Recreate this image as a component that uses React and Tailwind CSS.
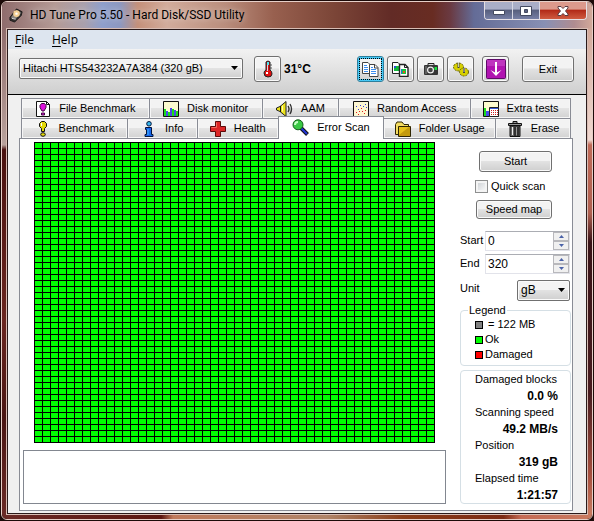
import * as React from "react"
import clsx from "clsx"

const COLS = 50
const ROWS = 50

const stats = [
  { label: "Damaged blocks", value: "0.0 %" },
  { label: "Scanning speed", value: "49.2 MB/s" },
  { label: "Position", value: "319 gB" },
  { label: "Elapsed time", value: "1:21:57" },
]

const Icon = ({ size = "size-4", box = "0 0 16 16", children }) => (
  <svg className={clsx("shrink-0", size)} viewBox={box} aria-hidden="true">
    {children}
  </svg>
)

/* Title bar and toolbar drawings */

const DiskIcon = () => (
  <Icon size="size-[15px]">
    <path d="M1 10 8 1l6 3-1 4-7 7-5-2z" fill="#33302f" stroke="#1c1a1a" />
    <path d="m2 10 6-8 5 3-6 7z" fill="#8b8580" />
    <circle cx="8" cy="6" r="3.5" fill="#f5cf93" />
    <circle cx="8" cy="6" r="1.3" fill="#fff" />
    <path d="m3 11 4 1" stroke="#ddd" />
  </Icon>
)

const ThermometerIcon = () => (
  <Icon size="h-[18px] w-[10px]" box="0 0 10 18">
    <path d="M3 2q2-2 4 0v8q2 1 2 4t-4 3q-4 0-4-4 0-2 2-3z" fill="#e01010" stroke="#222" />
    <path d="M4 2h2v3H4z" fill="#4fe3ee" />
    <path d="M4 5h1v6H4z" fill="#d8d8e8" />
    <path d="M3 12h2v2H3z" fill="#fff" />
    <path d="M7 5h2M7 8h2" stroke="#555" />
  </Icon>
)

const CopyIcon = () => (
  <Icon size="h-4 w-[17px]" box="0 0 17 16">
    <path d="M.5 1.5H6l2 2v9H.5z" fill="#fff" stroke="#444" />
    <path d="M2 4.5h3M2 6.5h4M2 8.5h4M2 10.5h4" stroke="#3f8ff0" />
    <path d="M7.5 3.5H13l3 3v9H7.5z" fill="#fff" stroke="#444" />
    <path d="M12.5 3.5V7H16" fill="none" stroke="#444" />
    <path d="M9 6.5h2M9 8.5h5M9 10.5h5M9 12.5h5" stroke="#3f8ff0" />
  </Icon>
)

const CopyImageIcon = () => (
  <Icon size="h-4 w-[17px]" box="0 0 17 16">
    <path d="M.5 1.5H6l2 2v9H.5z" fill="#fff" stroke="#222" />
    <path d="M2 5h5v5H2z" fill="#12b83a" />
    <path d="M2 5h2v2H2z" fill="#2850d0" />
    <path d="M7.5 3.5H13l3 3v9H7.5z" fill="#fff" stroke="#222" strokeWidth="1.4" />
    <path d="M12.5 3.5v3H16" fill="none" stroke="#222" />
    <path d="M9 8h5v5H9z" fill="#14c83c" />
    <path d="M9 8h1v5H9z" fill="#2070d8" />
    <path d="M11 10h2v2h-2z" fill="#e85020" />
  </Icon>
)

const CameraIcon = () => (
  <Icon>
    <path d="M5 5V2.5h6V5" fill="#ddd" stroke="#222" />
    <rect x="1" y="4" width="14" height="10" rx="1" fill="#353535" />
    <path d="M3 5v8" stroke="#888" />
    <circle cx="7.5" cy="9" r="3.5" fill="#eee" />
    <circle cx="7.5" cy="9" r="2.3" fill="#444" />
    <path d="M11.5 6H14v3h-2.500z" fill="#17e03b" />
  </Icon>
)

const GearsIcon = () => (
  <Icon>
    <g fill="#d8d000" stroke="#635f08">
      <ellipse cx="5.5" cy="6" rx="5" ry="4" strokeDasharray="2 1" />
      <ellipse cx="11" cy="11" rx="4.5" ry="4" strokeDasharray="2 1" />
    </g>
    <path d="M5.5 2v5M11 7v5" stroke="#444" strokeWidth="2" />
    <path d="M5.5 2v4M11 7v4" stroke="#c8c8b0" />
  </Icon>
)

const DownloadIcon = () => (
  <Icon size="size-5" box="0 0 20 20">
    <rect x=".5" y=".5" width="19" height="19" rx="1" fill="#b013b0" stroke="#5e0a68" />
    <path d="M1 1h18v6H1z" fill="#c94dca" opacity=".6" />
    <path d="M10 3v11" stroke="#fff" strokeWidth="2" />
    <path d="M4.5 11 10 14l5.500-3L10 17z" fill="#fff" />
  </Icon>
)

/* Tab drawings */

const FileBenchmarkIcon = () => (
  <Icon>
    <path d="M1.5.5h10l3 3v12h-13z" fill="#fff" stroke="#111" />
    <path d="M11.5.5v3h3" fill="none" stroke="#111" />
    <path d="M6.5 2.5h3l1.5 2v2L9 10H7L5 6.500v-2z" fill="#dd10dd" stroke="#400840" />
    <path d="M6.5 12h3v2h-3z" fill="#dd10dd" stroke="#400840" />
  </Icon>
)

const DiskMonitorIcon = () => (
  <Icon>
    <path d="M.5.5h15v15H.5z" fill="#fdfbd0" stroke="#111" />
    <path d="M1 8h2v7H1zM5 11h2v4H5zM9 8h2v7H9zM13 10h2v5h-2z" fill="#19dc19" />
    <path d="M3 10h2v5H3zM7 7h2v8H7zM11 9h2v6h-2z" fill="#4a49e8" />
  </Icon>
)

const SpeakerIcon = () => (
  <Icon size="h-4 w-[17px]" box="0 0 17 16">
    <path d="M.5 7 4 5.5l6-5v15l-6-5L.5 9z" fill="#ece21b" stroke="#222" />
    <path d="M4.5 5v6" stroke="#111" />
    <path d="M6.5 4.5v6" stroke="#fffbb0" />
    <path d="M12 5q2 3 0 6M14 3q3 5 0 10" fill="none" stroke="#333" strokeWidth="1.4" />
  </Icon>
)

const RandomAccessIcon = () => (
  <Icon>
    <path d="M.5.5h15v15H.5z" fill="#fdf6d2" stroke="#111" />
    <path d="M3 11h1v1H3zM6 10h1v1H6zM5 13h1v1H5zM9 10h1v1H9zM12 9h1v1h-1zM11 12h1v1h-1zM8 7h1v1H8z" fill="#e02020" />
    <path d="M3 5h1v1H3zM7 4h1v1H7zM10 5h1v1h-1zM12 3h1v1h-1zM5 8h1v1H5zM13 6h1v1h-1z" fill="#3040d8" />
  </Icon>
)

const ExtraTestsIcon = () => (
  <Icon>
    <path d="M.5.5h15v15H.5z" fill="#fdfbd0" stroke="#111" />
    <path d="M1 7h2v8H1z" fill="#19dc19" />
    <path d="M3 10h3v5H3z" fill="#4a49e8" />
    <path d="M6.5 6.5h9v9h-9z" fill="#fff" stroke="#222" />
    <path d="M7 7h8v1H7z" fill="#3658d8" />
    <path d="M8 9.5h7M8 11.5h7M8 13.5h7" stroke="#d02020" strokeDasharray="1 1" />
  </Icon>
)

const BenchmarkIcon = () => (
  <Icon>
    <path d="M6.5.5h3l2 2v3l-2 2v3h-3v-3l-2-2v-3z" fill="#e2d808" stroke="#111" />
    <path d="M6.5 2v3" stroke="#fff" />
    <ellipse cx="8" cy="13.5" rx="2.3" ry="1.8" fill="#e2d808" stroke="#111" />
  </Icon>
)

const InfoIcon = () => (
  <Icon>
    <circle cx="8" cy="2.8" r="2.3" fill="#35b8ee" stroke="#04143c" />
    <path d="M4.5 6.5h6v7H12v2H4v-2h1.500v-5h-1z" fill="#1767ea" stroke="#04143c" />
    <path d="M7 8v6" stroke="#43b7ff" />
  </Icon>
)

const HealthIcon = () => (
  <Icon>
    <path d="M5.5.5h5v5h5v5h-5v5h-5v-5h-5v-5h5z" fill="#dc2626" stroke="#5b0a0a" />
    <path d="M6.5 1.5v5h-5" fill="none" stroke="#f26a60" />
  </Icon>
)

const SearchIcon = () => (
  <Icon size="size-[17px]" box="0 0 17 17">
    <path d="m9 9 6.500 6.500" stroke="#111" strokeWidth="4" />
    <path d="m9 9 6 6" stroke="#2336d8" strokeWidth="2" />
    <circle cx="6" cy="5.8" r="5" fill="#39c944" stroke="#135a1a" />
    <path d="M3 6q0-3 3-3" fill="none" stroke="#c5ffc4" strokeWidth="2" />
  </Icon>
)

const FolderIcon = () => (
  <Icon>
    <path d="M.5 3.5 2 1h5l2 2.500h4.500v10H.5z" fill="#f3dc62" stroke="#2f2503" />
    <path d="M3.5 5.5h12v10h-12z" fill="#e6c01c" stroke="#2f2503" />
    <path d="M4 14 14 6h1v9H4z" fill="#c39a0d" />
  </Icon>
)

const TrashIcon = () => (
  <Icon>
    <path d="M6 2V.5h4V2M1.5 2.5h13v2h-13z" fill="#999" stroke="#111" />
    <path d="M3 5h10v10.500H3z" fill="#666" stroke="#111" />
    <path d="M5.5 6v8" stroke="#eee" />
    <path d="M8 6v9M11 6v9" stroke="#222" strokeWidth="1.5" />
    <path d="M9.5 6v8" stroke="#999" />
  </Icon>
)

const topTabs = [
  { name: "File Benchmark", icon: FileBenchmarkIcon },
  { name: "Disk monitor", icon: DiskMonitorIcon },
  { name: "AAM", icon: SpeakerIcon },
  { name: "Random Access", icon: RandomAccessIcon },
  { name: "Extra tests", icon: ExtraTestsIcon },
]

const bottomTabs = [
  { name: "Benchmark", icon: BenchmarkIcon },
  { name: "Info", icon: InfoIcon },
  { name: "Health", icon: HealthIcon },
  { name: "Error Scan", icon: SearchIcon },
  { name: "Folder Usage", icon: FolderIcon },
  { name: "Erase", icon: TrashIcon },
]

const face = "bg-linear-to-b from-[#f3f3f3] from-45% via-[#e2e2e2] via-50% to-[#cfcfcf]"

const Button = ({ className, selected, children, ...props }) => (
  <button
    type="button"
    className={clsx(
      "flex items-center justify-center rounded-[3px] border",
      selected
        ? "border-[#2d7f9d] shadow-[inset_0_0_0_2px_#46c8f5] outline-1 -outline-offset-[3px] outline-dotted outline-black"
        : "border-[#707070] shadow-[inset_0_0_0_1px_#fafafa]",
      face,
      className
    )}
    {...props}
  >
    {children}
  </button>
)

const Select = ({ label, value, className }) => (
  <div className={clsx("relative", className)}>
    <select
      aria-label={label}
      id={label}
      className={clsx(
        "h-[21px] w-full appearance-none rounded-[2px] border border-[#707070] pl-[3px] leading-[19px] shadow-[inset_0_0_0_1px_#fafafa]",
        face
      )}
    >
      <option>{value}</option>
    </select>
    <svg className="pointer-events-none absolute top-2 right-[5px] h-1 w-[7px]" viewBox="0 0 7 4">
      <path d="M0 0h7L3.5 4z" />
    </svg>
  </div>
)

const SpinBox = ({ label, initial }) => {
  const [value, setValue] = React.useState(initial)

  return (
    <div className="flex items-start justify-between">
      <label htmlFor={label} className="leading-[18px]">{label}</label>
      <div className="mr-px flex h-5 w-[85px] border border-[#e2e3ea] border-t-[#abadb3] bg-white">
        <input
          id={label}
          type="text"
          inputMode="numeric"
          value={value}
          onChange={(e) => setValue(Number(e.target.value) || 0)}
          className="w-0 grow pl-[2px] text-[12px] outline-none"
        />
        <div className="flex w-4 flex-col">
          <button
            type="button"
            aria-label={`Increase ${label}`}
            onClick={() => setValue(value + 1)}
            className="flex flex-1 items-center justify-center border border-[#b8b8bc] bg-[#f0f0f0]"
          >
            <svg className="h-[3px] w-[5px]" viewBox="0 0 5 3"><path d="M0 3h5L2.500 0z" fill="#4a62a8" /></svg>
          </button>
          <button
            type="button"
            aria-label={`Decrease ${label}`}
            onClick={() => setValue(Math.max(0, value - 1))}
            className="flex flex-1 items-center justify-center border border-[#b8b8bc] bg-[#f0f0f0]"
          >
            <svg className="h-[3px] w-[5px]" viewBox="0 0 5 3"><path d="M0 0h5L2.500 3z" fill="#4a62a8" /></svg>
          </button>
        </div>
      </div>
    </div>
  )
}

const Tab = ({ tab, active, onSelect }) => {
  const TabIcon = tab.icon
  return (
    <button
      type="button"
      role="tab"
      aria-selected={active}
      onClick={() => onSelect(tab.name)}
      className={clsx(
        "flex items-center justify-center gap-2 whitespace-nowrap border-t border-r border-[#898c95]",
        active
          ? "z-10 -mt-[2px] -mb-px -ml-px border-l bg-white pb-[2px]"
          : "bg-linear-to-b from-[#f3f3f3] from-45% via-[#e4e4e4] via-50% to-[#d2d2d2] shadow-[inset_0_0_0_1px_#f6f6f6]"
      )}
    >
      <TabIcon />
      {tab.name}
    </button>
  )
}

const TitleBar = () => (
  <header className="flex h-[26px] items-start bg-[linear-gradient(90deg,#8f6c6c_0%,#b49a95_9%,#a9a0ad_14%,#8f9fcb_17%,#8d98c0_20%,#c4907a_23%,#d2ac9c_28%,#b98d7c_38%,#98604f_46%,#7c4638_56%,#622b26_66%,#682c22_73%,#6a3a42_76%,#646c97_80%,#8890b4_92%,#b08c90_97%,#d3a99a_100%)] pl-[7px]">
    <div className="flex h-[26px] grow items-center gap-[6px] text-[12px]">
      <DiskIcon />
      <h1 className="whitespace-nowrap font-[Roboto,sans-serif] [text-shadow:0_0_6px_#ffffffaa]">HD Tune Pro 5.50 - Hard Disk/SSD Utility</h1>
    </div>
    <div className="mr-[5px] flex h-[18px] shrink-0 overflow-hidden rounded-b-[4px] border border-t-0 border-[#e5dfe4]">
      <button type="button" aria-label="Minimize" className="flex w-7 items-center justify-center border-r border-[#d7d8e4] bg-linear-to-b from-[#a9aec7] from-40% via-[#59607f] via-50% to-[#767fa5]">
        <svg className="mt-1 h-[5px] w-3" viewBox="0 0 12 5"><path d="M.5.5h11v4H.5z" fill="#fff" stroke="#444a60" /></svg>
      </button>
      <button type="button" aria-label="Maximize" className="flex w-[27px] items-center justify-center border-r border-[#d7d8e4] bg-linear-to-b from-[#a9aec7] from-40% via-[#59607f] via-50% to-[#767fa5]">
        <svg className="h-[10px] w-3" viewBox="0 0 12 10"><path d="M.5.5h11v9H.5zM4.5 3.5v3h3v-3z" fill="#fff" fillRule="evenodd" stroke="#444a60" /></svg>
      </button>
      <button type="button" aria-label="Close" className="flex w-[46px] items-center justify-center bg-linear-to-b from-[#dc9a8c] from-40% via-[#b32a18] via-50% to-[#cf5a40]">
        <svg className="h-[10px] w-3" viewBox="0 0 12 10"><path d="M1 .5h3l2 2 2-2h3V2L8.500 5 11 8v1.500H8l-2-2-2 2H1V8l2.500-3L1 2z" fill="#fff" stroke="#5a3a40" /></svg>
      </button>
    </div>
  </header>
)

const Toolbar = () => (
  <div className="flex h-[46px] items-start border-b border-black bg-linear-to-b from-[#f2f2f2] to-[#cfcfcf] pt-[7px] pr-3 pl-[11px]">
    <Select label="Drive" value="Hitachi HTS543232A7A384 (320 gB)" className="mt-[2px] w-56" />
    <Button aria-label="Temperature" className="ml-[11px] h-[26px] w-[27px]"><ThermometerIcon /></Button>
    <span className="ml-[3px] text-[12px] leading-[26px] font-bold">31°C</span>
    <div className="ml-auto flex gap-[3px]">
      <Button aria-label="Copy text" selected className="h-[26px] w-[27px]"><CopyIcon /></Button>
      <Button aria-label="Copy image" className="h-[26px] w-[27px]"><CopyImageIcon /></Button>
      <Button aria-label="Screenshot" className="h-[26px] w-[27px]"><CameraIcon /></Button>
      <Button aria-label="Options" className="h-[26px] w-[27px]"><GearsIcon /></Button>
    </div>
    <Button aria-label="Save" className="ml-2 h-[26px] w-[27px]"><DownloadIcon /></Button>
    <Button className="ml-[13px] h-[26px] w-[52px]">Exit</Button>
  </div>
)

const ScanMap = () => (
  <svg
    className="mt-[3px] ml-[11px] h-auto w-[401px] max-w-full"
    viewBox={`0 0 ${COLS * 8 + 1} ${ROWS * 6 + 1}`}
    role="img"
    aria-label="Scan map"
  >
    <defs>
      <pattern id="block" width="8" height="6" patternUnits="userSpaceOnUse">
        <path d="M1 1h7v5H1z" fill="#00ff00" />
      </pattern>
    </defs>
    <rect width="100%" height="100%" />
    <rect width={COLS * 8} height={ROWS * 6} fill="url(#block)" />
  </svg>
)

const SidePanel = () => (
  <aside className="flex w-[111px] shrink-0 flex-col pt-3">
    <Button className="ml-[19px] h-[21px] w-[73px]">Start</Button>
    <label className="mt-2 ml-[15px] flex h-[13px] items-center gap-[3px] whitespace-nowrap">
      <input type="checkbox" className="size-[13px] appearance-none border border-[#8e8f8f] bg-linear-to-br from-[#c8ccd0] to-white shadow-[inset_0_0_0_2px_#f4f4f4] checked:bg-[#4a62a8]" />
      Quick scan
    </label>
    <Button className="mt-[7px] ml-4 h-[19px] w-[76px]">Speed map</Button>

    <div className="mt-3 flex flex-col gap-[3px]">
      <SpinBox label="Start" initial={0} />
      <SpinBox label="End" initial={320} />
    </div>
    <div className="mt-[6px] flex items-start justify-between">
      <label htmlFor="Unit" className="leading-4">Unit</label>
      <Select label="Unit" value="gB" className="mr-px w-[53px] text-[12px]" />
    </div>

    <fieldset className="mt-[2px] rounded-[4px] border border-[#d5dfe5] pb-[3px] pl-[14px]">
      <legend className="-ml-[7px] px-px leading-[14px]">Legend</legend>
      <ul className="leading-[15px]">
        <li className="flex items-center gap-[5px]"><span className="size-2 border border-black bg-[#808080]" />= 122 MB</li>
        <li className="flex items-center gap-[2px]"><span className="size-2 border border-black bg-[#00ff00]" />Ok</li>
        <li className="flex items-center gap-[2px]"><span className="size-2 border border-black bg-[#ff0000]" />Damaged</li>
      </ul>
    </fieldset>

    <dl className="mt-1 rounded-[4px] border border-[#d5dfe5] pr-3 pl-[14px]">
      {stats.map((stat) => (
        <React.Fragment key={stat.label}>
          <dt className="leading-[17px] whitespace-nowrap">{stat.label}</dt>
          <dd className="text-right text-[12px] leading-[16px] font-bold">{stat.value}</dd>
        </React.Fragment>
      ))}
    </dl>
  </aside>
)

const App = () => {
  const [current, setCurrent] = React.useState("Error Scan")

  const renderTabs = (tabs) =>
    tabs.map((tab) => (
      <Tab key={tab.name} tab={tab} active={tab.name === current} onSelect={setCurrent} />
    ))

  return (
    <div className="bg-[#1c0a08] p-px font-['Liberation_Sans',sans-serif] text-[11px] text-black">
      <div className="overflow-hidden rounded-[6px] border border-[#e6cfc8]">
        <TitleBar />
        <div className="flex">
          <div className="w-1 shrink-0 bg-[linear-gradient(#8f6c6c_0%,#b9a29c_24%,#4a1210_25%,#6a2620_60%,#4a1614_80%,#6a2a26_100%)]" />
          <div className="min-w-0 grow border border-[#d8bdb4]">
            <div className="border border-[#2a1a1a] bg-[#f0f0f0]">
              <nav className="flex h-[19px] gap-[18px] bg-[#dde5ef] pl-[7px] font-['Open_Sans',sans-serif] text-[12px] leading-[19px]">
                <button type="button"><u className="underline-offset-2">F</u>ile</button>
                <button type="button"><u className="underline-offset-2">H</u>elp</button>
              </nav>
              <Toolbar />
              <main className="pt-[3px] pr-[13px] pb-[2px] pl-[11px]">
                <div role="tablist" className="mx-[2px]">
                  <div className="grid h-5 grid-cols-[128fr_113fr_77fr_132fr_100fr] border-l border-[#898c95]">{renderTabs(topTabs)}</div>
                  <div className="grid h-5 grid-cols-[106fr_70fr_81fr_106fr_112fr_75fr] border-l border-[#898c95]">{renderTabs(bottomTabs)}</div>
                </div>
                <section className="flex gap-[14px] border border-[#898c95] bg-white pr-px pb-[6px] pl-[3px]">
                  <div className="flex min-w-0 grow flex-col gap-[7px]">
                    <ScanMap />
                    <textarea aria-label="Log" className="h-[54px] w-full resize-none border border-[#828790] bg-white outline-none" />
                  </div>
                  <SidePanel />
                </section>
              </main>
            </div>
          </div>
          <div className="w-1 shrink-0 bg-[linear-gradient(#d3a99a_0%,#f0d8d0_23%,#c06a58_24%,#b06050_38%,#3a1418_44%,#4a1c20_75%,#a8503f_92%,#c97a60_100%)]" />
        </div>
        <div className="h-1 bg-[linear-gradient(90deg,#6a2a26_0%,#5c1610_27%,#c07a5c_29%,#b08468_55%,#8a3c18_68%,#7c2a14_85%,#c56a54_88%,#c97a60_100%)]" />
      </div>
    </div>
  )
}

export default App
